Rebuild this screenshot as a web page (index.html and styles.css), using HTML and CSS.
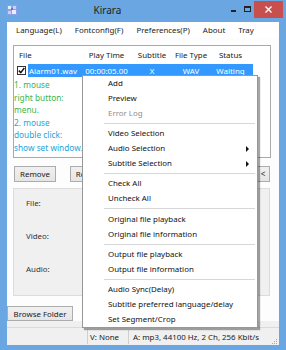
FILE: index.html
```html
<!DOCTYPE html>
<html>
<head>
<meta charset="utf-8">
<link rel="stylesheet" href="styles.css">
</head>
<body>
<div class="window">
  <div class="titlebar">
    <div class="appicon">
      <svg width="10" height="10" viewBox="0 0 10 10">
        <rect x="0" y="0" width="10" height="10" fill="#8fa0e8"/>
        <rect x="1" y="1" width="3" height="3" fill="#e8ecff"/>
        <rect x="6" y="1" width="3" height="3" fill="#c9d0ff"/>
        <rect x="1" y="6" width="3" height="3" fill="#c9d0ff"/>
        <rect x="5" y="5" width="4" height="4" fill="#e8ecff"/>
        <rect x="4" y="3" width="2" height="2" fill="#6a72c8"/>
      </svg>
    </div>
    <div class="title">Kirara</div>
    <div class="caption">
      <div class="cap-btn cap-min"><span class="min-glyph"></span></div>
      <div class="cap-btn cap-max"><span class="max-glyph"></span></div>
      <div class="cap-btn cap-close">
        <svg width="7" height="7" viewBox="0 0 7 7"><path d="M0.5 0.5 L6.5 6.5 M6.5 0.5 L0.5 6.5" stroke="#fff" stroke-width="1.4"/></svg>
      </div>
    </div>
  </div>
  <div class="client">
    <div class="menubar">
      <span class="mitem">Language(L)</span>
      <span class="mitem">Fontconfig(F)</span>
      <span class="mitem">Preferences(P)</span>
      <span class="mitem">About</span>
      <span class="mitem">Tray</span>
    </div>
    <div class="content">
      <div class="listview">
        <div class="lv-header">
          <div class="col c1 left">File</div>
          <div class="col c2">Play Time</div>
          <div class="col c3">Subtitle</div>
          <div class="col c4">File Type</div>
          <div class="col c5">Status</div>
        </div>
        <div class="lv-row">
          <div class="chk">
            <svg width="7" height="7" viewBox="0 0 7 7"><path d="M0.8 3.6 L2.8 5.6 L6.3 1" stroke="#111" stroke-width="1.5" fill="none"/></svg>
          </div>
          <div class="sel">
            <div class="col c1s left">Alarm01.wav</div>
            <div class="col c2">00:00:05.00</div>
            <div class="col c3">X</div>
            <div class="col c4">WAV</div>
            <div class="col c5">Waiting</div>
          </div>
        </div>
        <div class="hint">
          <div class="green">1. mouse</div>
          <div class="green">right button:</div>
          <div class="green">menu.</div>
          <div class="blue">2. mouse</div>
          <div class="blue">double click:</div>
          <div class="blue">show set window.</div>
        </div>
      </div>
      <div class="btnrow">
        <div class="btn btn-remove">Remove</div>
        <div class="btn btn-r">Rename</div>
        <div class="spacer"></div>
        <div class="btn btn-lt">&lt;</div>
      </div>
      <div class="groupbox">
        <div class="glabel">File:</div>
        <div class="glabel">Video:</div>
        <div class="glabel">Audio:</div>
      </div>
      <div class="bottomrow">
        <div class="btn btn-browse">Browse Folder</div>
      </div>
    </div>
    <div class="statusbar">
      <div class="panel p1"></div>
      <div class="panel p2">V: None</div>
      <div class="panel p3">A: mp3, 44100 Hz, 2 Ch, 256 Kbit/s</div>
      <div class="grip">
        <svg width="7" height="7" viewBox="0 0 7 7">
          <rect x="5" y="1" width="1" height="1" fill="#aaa"/>
          <rect x="3" y="3" width="1" height="1" fill="#aaa"/>
          <rect x="5" y="3" width="1" height="1" fill="#aaa"/>
          <rect x="1" y="5" width="1" height="1" fill="#aaa"/>
          <rect x="3" y="5" width="1" height="1" fill="#aaa"/>
          <rect x="5" y="5" width="1" height="1" fill="#aaa"/>
        </svg>
      </div>
    </div>
  </div>

  <div class="ctxmenu">
    <div class="ci">Add</div>
    <div class="ci">Preview</div>
    <div class="ci disabled">Error Log</div>
    <div class="csep"></div>
    <div class="ci">Video Selection</div>
    <div class="ci sub">Audio Selection</div>
    <div class="ci sub">Subtitle Selection</div>
    <div class="csep"></div>
    <div class="ci">Check All</div>
    <div class="ci">Uncheck All</div>
    <div class="csep"></div>
    <div class="ci">Original file playback</div>
    <div class="ci">Original file information</div>
    <div class="csep"></div>
    <div class="ci">Output file playback</div>
    <div class="ci">Output file information</div>
    <div class="csep"></div>
    <div class="ci">Audio Sync(Delay)</div>
    <div class="ci">Subtitle preferred language/delay</div>
    <div class="ci">Set Segment/Crop</div>
  </div>
</div>
</body>
</html>
```

FILE: styles.css
```css
* { box-sizing: border-box; }
html, body { margin: 0; padding: 0; }
body {
  width: 286px;
  height: 350px;
  overflow: hidden;
  font-family: "Noto Sans", sans-serif;
  font-size: 7.9px;
  color: #1a1a1a;
}
.window {
  position: relative;
  width: 286px;
  height: 350px;
  background: #6aa7e2;
  display: flex;
  flex-direction: column;
  padding: 0 7px 5px 7px;
}
.titlebar {
  height: 22px;
  display: flex;
  align-items: center;
  position: relative;
}
.appicon { width: 10px; height: 10px; margin-top: -2px; display: flex; }
.title {
  flex: 1;
  text-align: center;
  font-size: 10px;
  color: #222;
  padding-right: 29px;
  margin-top: -3px;
}
.caption { display: flex; align-self: flex-start; margin-right: -4px; }
.cap-btn { height: 17px; display: flex; align-items: center; justify-content: center; }
.cap-min { width: 13px; }
.cap-max { width: 14px; }
.cap-close { width: 29px; background: #c7504f; margin-top: 1px; }
.min-glyph { width: 5px; height: 2px; background: #222; margin-top: 5px; }
.max-glyph { width: 7px; height: 6px; border: 1px solid #222; border-top-width: 2px; margin-top: 1px; }

.client {
  flex: 1;
  background: #f0f0f0;
  display: flex;
  flex-direction: column;
}
.menubar {
  height: 16px;
  background: #fff;
  display: flex;
  align-items: center;
  padding-left: 9px;
}
.mitem { color: #1a1a1a; margin-right: 13px; }

.content {
  flex: 1;
  display: flex;
  flex-direction: column;
  padding: 7px 8px 0 6px;
  background: #fdfdfd;
}
.listview {
  height: 113px;
  background: #fff;
  border: 1px solid #a9a9a9;
}
.lv-header {
  height: 18px;
  display: flex;
  align-items: center;
}
.col { text-align: center; white-space: nowrap; }
.left { text-align: left; }
.c1 { width: 69px; padding-left: 5px; }
.c1s { width: 55px; padding-left: 1px; }
.c2 { width: 47px; }
.c3 { width: 44px; }
.c4 { width: 34px; }
.c5 { width: 45px; }
.lv-row {
  height: 13px;
  display: flex;
  align-items: center;
}
.chk {
  width: 9px; height: 9px;
  margin-left: 3px;
  margin-right: 2px;
  border: 1px solid #333;
  background: #fff;
  display: flex; align-items: center; justify-content: center;
}
.sel {
  display: flex;
  align-items: center;
  height: 13px;
  background: #3399ff;
  color: #fff;
}
.hint {
  padding-left: 0;
  margin-top: 2px;
  line-height: 12.6px;
  font-size: 8.3px;
}
.green { color: #3cb54a; }
.blue { color: #27a3d8; }

.btnrow {
  display: flex;
  align-items: center;
  margin-top: 7px;
  height: 17px;
}
.btn {
  border: 1px solid #acacac;
  background: linear-gradient(#f0f0f0, #e5e5e5);
  display: flex;
  align-items: center;
  justify-content: center;
  height: 16px;
  white-space: nowrap;
}
.btn-remove { width: 42px; margin-left: 1px; }
.btn-r { width: 42px; margin-left: 14px; }
.spacer { flex: 1; }
.btn-lt { width: 14px; margin-right: 1px; font-size: 8px; }

.groupbox {
  margin-top: 6px;
  height: 108px;
  border: 1px solid #dcdcdc;
  background: #f0f0f0;
  margin-right: 1px;
  padding: 8px 0 0 12px;
  display: flex;
  flex-direction: column;
  gap: 21px;
}
.glabel { height: 12px; line-height: 12px; color: #333; }

.bottomrow {
  margin-top: 10px;
  margin-left: -6px;
  display: flex;
}
.btn-browse { width: 66px; height: 15px; }

.statusbar {
  height: 18px;
  margin-top: 6px;
  border-top: 1px solid #dadada;
  display: flex;
  align-items: center;
  background: #f0f0f0;
}
.panel { height: 14px; display: flex; align-items: center; white-space: nowrap; }
.p1 { width: 81px; border-right: 1px solid #cfcfcf; }
.p2 { width: 41px; padding-left: 2px; border-right: 1px solid #cfcfcf; }
.p3 { flex: 1; padding-left: 4px; }
.grip { width: 8px; display: flex; align-self: flex-end; }

.ctxmenu {
  position: absolute;
  left: 82px;
  top: 75px;
  width: 176px;
  background: #fff;
  border: 1px solid #979797;
  box-shadow: 2px 2px 1px rgba(0,0,0,0.35);
  padding: 0;
}
.ci {
  height: 15px;
  line-height: 15px;
  padding-left: 25px;
  position: relative;
  white-space: nowrap;
  color: #111;
}
.ci.disabled { color: #8d8d8d; }
.ci.sub::after {
  content: "";
  position: absolute;
  right: 8px;
  top: 5px;
  border-left: 3px solid #111;
  border-top: 3px solid transparent;
  border-bottom: 3px solid transparent;
}
.csep {
  height: 1px;
  background: #d7d7d7;
  margin: 2.1px 2px 2.1px 21px;
}
```
